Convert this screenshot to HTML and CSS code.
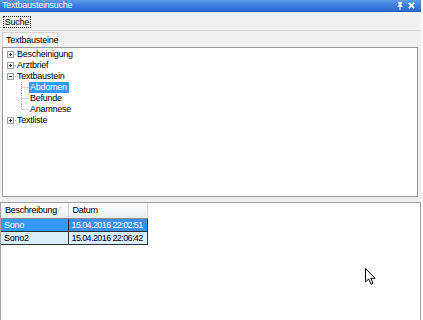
FILE: index.html
```html
<!DOCTYPE html>
<html>
<head>
<meta charset="utf-8">
<link rel="stylesheet" href="styles.css">
</head>
<body>
<div class="window">
  <div class="titlebar">
    <span class="title">Textbausteinsuche</span>
    <span class="tb-icons">
      <svg class="ico-pin" width="6" height="8" viewBox="0 0 6 8"><path d="M1 0h4v1H4.5v3H5.5v1H3.5v3h-1V5H0.5V4h1V1H1z" fill="#fff"/></svg>
      <svg class="ico-x" width="7" height="7" viewBox="0 0 7 7"><path d="M0.8 0.8L6.2 6.2M6.2 0.8L0.8 6.2" stroke="#fff" stroke-width="1.8"/></svg>
    </span>
  </div>
  <div class="main">
    <div class="toolbar">
      <div class="btn"><span class="btn-focus">Suche</span></div>
    </div>
    <div class="tabs">
      <div class="tabstrip">
        <div class="tab">Textbausteine</div>
      </div>
      <div class="tree">
        <div class="node"><span class="box plus"></span><span class="dots"></span><span class="label">Bescheinigung</span></div>
        <div class="node"><span class="box plus"></span><span class="dots"></span><span class="label">Arztbrief</span></div>
        <div class="node"><span class="box minus"></span><span class="dots"></span><span class="label">Textbaustein</span></div>
        <div class="node child"><svg class="conn" width="8" height="11" viewBox="0 0 8 11"><path d="M0.5 0V11M0.5 5.5H8" stroke="#a0a0a0" stroke-dasharray="1 1"/></svg><span class="label sel">Abdomen</span></div>
        <div class="node child"><svg class="conn" width="8" height="11" viewBox="0 0 8 11"><path d="M0.5 0V11M0.5 5.5H8" stroke="#a0a0a0" stroke-dasharray="1 1"/></svg><span class="label">Befunde</span></div>
        <div class="node child"><svg class="conn" width="8" height="11" viewBox="0 0 8 11"><path d="M0.5 0V5.5M0.5 5.5H8" stroke="#a0a0a0" stroke-dasharray="1 1"/></svg><span class="label">Anamnese</span></div>
        <div class="node"><span class="box plus"></span><span class="dots"></span><span class="label">Textliste</span></div>
      </div>
    </div>
    <div class="splitter"></div>
    <div class="gridpanel">
      <table class="grid">
        <thead>
          <tr><th class="c1">Beschreibung<span class="sort">⁄</span></th><th class="c2">Datum</th></tr>
        </thead>
        <tbody>
          <tr class="r-sel"><td>Sono</td><td class="date">15.04.2016 22:02:51</td></tr>
          <tr class="r-cur"><td>Sono2</td><td class="date">15.04.2016 22:06:42</td></tr>
        </tbody>
      </table>
      <svg class="cursor" width="11" height="17" viewBox="0 0 11 17"><path d="M0.5 0.5V14L3.7 11L6 16.2L8 15.3L5.8 10.3H10.2Z" fill="#fff" stroke="#000" stroke-width="1" stroke-linejoin="miter"/></svg>
    </div>
  </div>
</div>
</body>
</html>
```
FILE: styles.css
```css
html, body {
  margin: 0;
  padding: 0;
  background: #fdfdfd;
}
body {
  font-family: "Liberation Sans", Arial, sans-serif;
  font-size: 9px;
  letter-spacing: -0.25px;
  color: #000;
}
.window {
  width: 421px;
  height: 320px;
  display: flex;
  flex-direction: column;
  background: #f0f0f0;
  overflow: hidden;
}
.titlebar {
  height: 12px;
  flex: none;
  background: linear-gradient(#5d9ded, #3b7bdc 55%, #2d6ad0);
  border-bottom: 1px solid #2a5fb8;
  box-sizing: border-box;
  display: flex;
  align-items: center;
  justify-content: space-between;
  padding: 0 6px 0 2px;
}
.title {
  color: #fff;
  line-height: 11px;
}
.tb-icons {
  display: flex;
  align-items: center;
  gap: 5px;
}
.ico-pin { display: block; }
.ico-x { display: block; }
.main {
  flex: 1;
  display: flex;
  flex-direction: column;
  min-height: 0;
}
.toolbar {
  height: 18px;
  flex: none;
  box-sizing: border-box;
  padding: 3px 0 0 2px;
}
.btn {
  width: 30px;
  height: 14px;
  box-sizing: border-box;
  padding: 1px;
}
.btn-focus {
  display: flex;
  align-items: center;
  justify-content: center;
  height: 100%;
  box-sizing: border-box;
  border: 1px dotted #222;
}
.tabs {
  flex: 1;
  display: flex;
  flex-direction: column;
  min-height: 0;
  border-top: 1px solid #dadada;
}
.tabstrip {
  height: 16px;
  flex: none;
  display: flex;
  align-items: flex-end;
  padding-left: 2px;
}
.tab {
  height: 15px;
  width: 56px;
  box-sizing: border-box;
  background: #fbfbfb;
  border: 1px solid #d4d4d4;
  border-bottom: none;
  padding-left: 3px;
  display: flex;
  align-items: center;
}
.tree {
  flex: 1;
  margin: 0 3px 0 2px;
  background: #fff;
  border: 1px solid #9a9a9a;
  padding-top: 0.5px;
}
.node {
  height: 11.1px;
  display: flex;
  align-items: center;
}
.box {
  width: 7px;
  height: 7px;
  box-sizing: border-box;
  margin-left: 4px;
  border: 1px solid #9aa3ad;
  background: linear-gradient(#fff, #e6e9ee);
  position: relative;
}
.box::before {
  content: "";
  position: absolute;
  left: 1px;
  top: 2px;
  width: 3px;
  height: 1px;
  background: #333;
}
.plus::after {
  content: "";
  position: absolute;
  left: 2px;
  top: 1px;
  width: 1px;
  height: 3px;
  background: #333;
}
.dots {
  width: 1px;
  height: 1px;
  margin-left: 1px;
  background: #a0a0a0;
}
.label {
  padding: 0 1px;
  line-height: 11px;
}
.child .conn {
  display: block;
  margin-left: 18px;
}
.sel {
  background: #3399ff;
  color: #fff;
  padding: 0 2px 0 1px;
}
.splitter {
  height: 5px;
  flex: none;
}
.gridpanel {
  height: 118px;
  flex: none;
  background: #fff;
  border: 1px solid #a0a0a0;
  border-bottom: none;
  box-sizing: border-box;
  position: relative;
}
.grid {
  border-collapse: collapse;
  table-layout: fixed;
  width: 146px;
}
.grid th {
  height: 15px;
  padding: 0 0 0 4px;
  text-align: left;
  font-weight: normal;
  background: linear-gradient(#ffffff, #f3f4f6 60%, #e9ebee);
  border-right: 1px solid #d5d5d5;
  border-bottom: 1px solid #8a8a8a;
  box-sizing: border-box;
}
.grid th.c1 {
  width: 67px;
  position: relative;
}
.grid th.c2 {
  width: 79px;
}
.sort {
  position: absolute;
  left: 58px;
  top: 3px;
  color: #9a9a9a;
  font-size: 7px;
}
.grid td {
  height: 13px;
  padding: 0 0 0 3px;
  border: 1px solid #303030;
  white-space: nowrap;
  overflow: hidden;
  box-sizing: border-box;
}
.grid td.date {
  letter-spacing: -0.6px;
}
.grid tr td:first-child {
  border-left: none;
}
.r-sel td {
  background: #3399ff;
  color: #fff;
}
.r-sel td:last-child {
  background: #3a90ea;
}
.r-cur td {
  background: #dbeffb;
}
.cursor {
  position: absolute;
  left: 364px;
  top: 65px;
}
```
